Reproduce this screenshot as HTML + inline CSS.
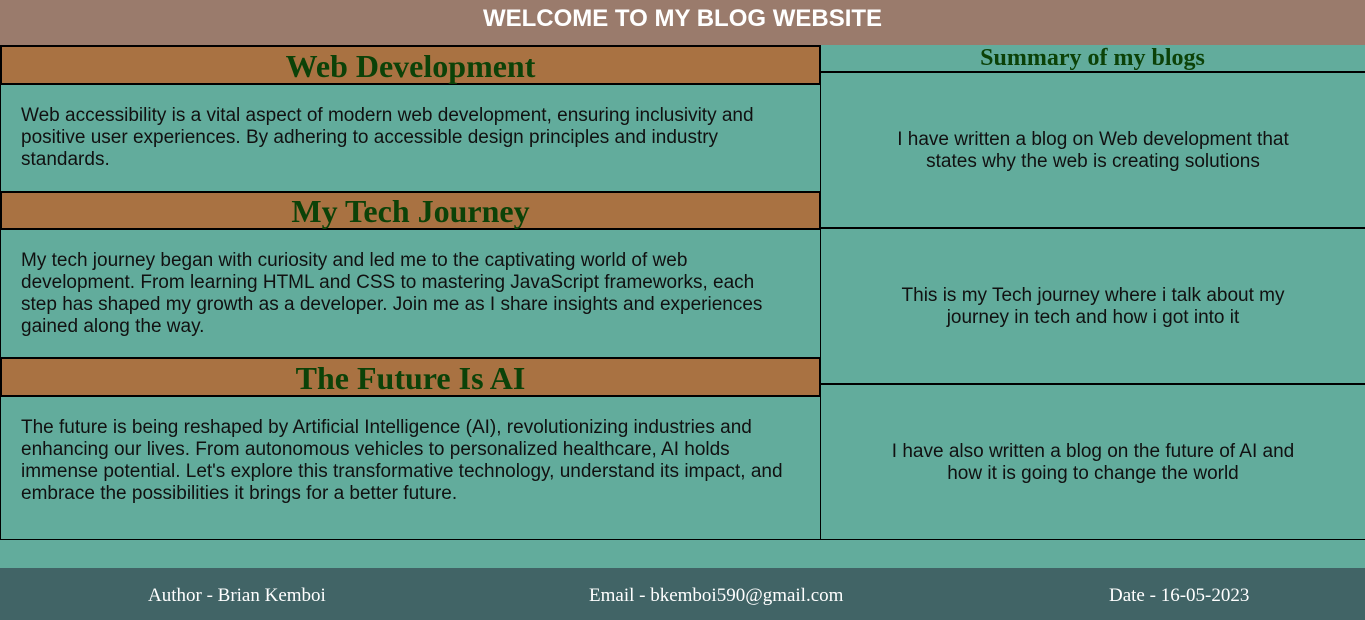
<!DOCTYPE html>
<html><head><style>
body{margin:0;width:1365px;height:620px;background:#62ac9c;position:relative;overflow:hidden;font-family:"Liberation Sans",sans-serif;}
.a{position:absolute;box-sizing:border-box;}
.hdr{left:0;top:0;width:1365px;height:45px;background:#9a7b6c;color:#fff;font-weight:bold;font-size:24px;text-align:center;line-height:38px;}
.h{background:#a97242;border:2px solid #000;color:#0c4208;font-family:"Liberation Serif",serif;font-weight:bold;font-size:32px;text-align:center;}
.p{border:1px solid #000;border-top:none;font-size:19px;line-height:22px;color:#111;padding:20px 25px 0 20px;}
.s{border-left:1px solid #000;border-bottom:2px solid #000;font-size:19px;line-height:22px;color:#111;text-align:center;display:flex;align-items:center;justify-content:center;padding:2px 60px 0;}
.ft{left:0;top:568px;width:1365px;height:52px;background:#416466;color:#fff;font-family:"Liberation Serif",serif;font-size:19px;}
.ft span{position:absolute;top:17px;}
</style></head><body>
<div class="a hdr">WELCOME TO MY BLOG WEBSITE</div>
<div class="a h" style="left:0;top:45px;width:821px;height:40px;line-height:38px;">Web Development</div>
<div class="a p" style="left:0;top:85px;width:821px;height:107px;">Web accessibility is a vital aspect of modern web development, ensuring inclusivity and positive user experiences. By adhering to accessible design principles and industry standards.</div>
<div class="a h" style="left:0;top:191px;width:821px;height:39px;line-height:37px;">My Tech Journey</div>
<div class="a p" style="left:0;top:230px;width:821px;height:128px;">My tech journey began with curiosity and led me to the captivating world of web development. From learning HTML and CSS to mastering JavaScript frameworks, each step has shaped my growth as a developer. Join me as I share insights and experiences gained along the way.</div>
<div class="a h" style="left:0;top:357px;width:821px;height:40px;line-height:38px;">The Future Is AI</div>
<div class="a p" style="left:0;top:397px;width:821px;height:143px;">The future is being reshaped by Artificial Intelligence (AI), revolutionizing industries and enhancing our lives. From autonomous vehicles to personalized healthcare, AI holds immense potential. Let's explore this transformative technology, understand its impact, and embrace the possibilities it brings for a better future.</div>
<div class="a" style="left:820px;top:45px;width:545px;height:28px;border-bottom:2px solid #000;color:#0c4208;font-family:'Liberation Serif',serif;font-weight:bold;font-size:24px;text-align:center;line-height:27px;">Summary of my blogs</div>
<div class="a s" style="left:820px;top:73px;width:545px;height:156px;">I have written a blog on Web development that states why the web is creating solutions</div>
<div class="a s" style="left:820px;top:229px;width:545px;height:156px;">This is my Tech journey where i talk about my journey in tech and how i got into it</div>
<div class="a s" style="left:820px;top:385px;width:545px;height:155px;border-bottom:1px solid #000;">I have also written a blog on the future of AI and how it is going to change the world</div>
<div class="a ft"><span style="left:148px">Author - Brian Kemboi</span><span style="left:589px">Email - bkemboi590@gmail.com</span><span style="left:1109px">Date - 16-05-2023</span></div>
</body></html>
